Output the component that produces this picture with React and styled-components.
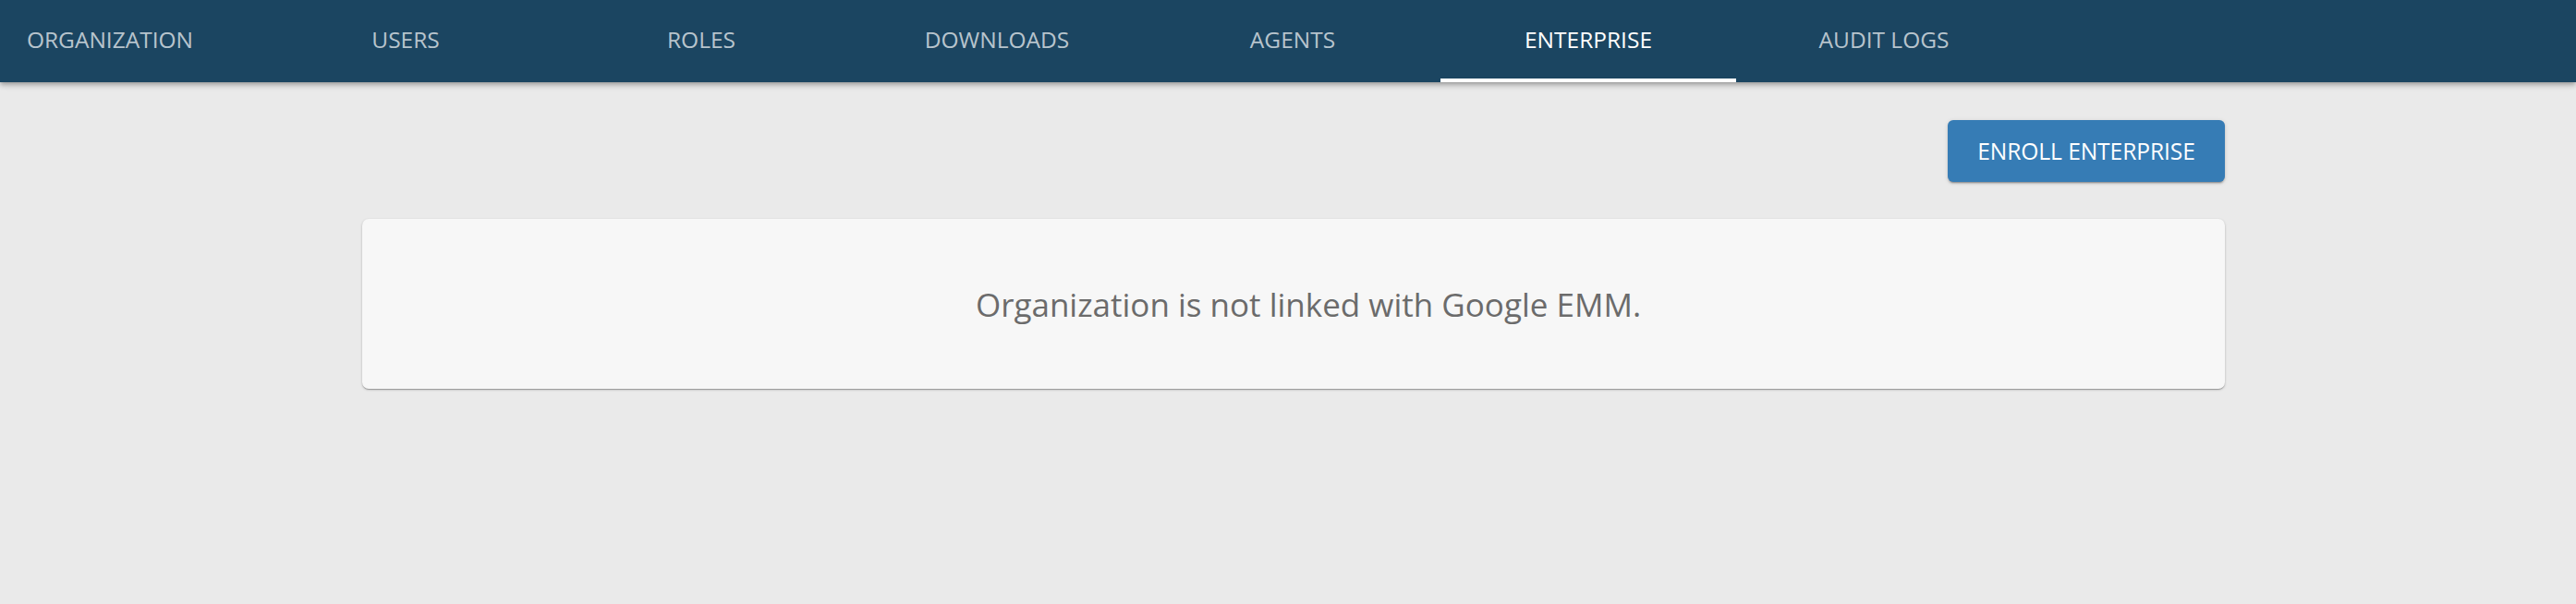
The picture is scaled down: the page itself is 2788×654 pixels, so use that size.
import React, { useState } from 'react'
import styled, { createGlobalStyle, css } from 'styled-components'

const tabs = ['ORGANIZATION', 'USERS', 'ROLES', 'DOWNLOADS', 'AGENTS', 'ENTERPRISE', 'AUDIT LOGS']

function App() {
  const [active, setActive] = useState('ENTERPRISE')

  return (
    <>
      <GlobalStyle />
      <Page>
        <NavBar>
          <TabStrip>
            {tabs.map((tab) => (
              <Tab key={tab} $active={tab === active} onClick={() => setActive(tab)}>
                {tab}
              </Tab>
            ))}
          </TabStrip>
        </NavBar>

        <Content>
          <Actions>
            <Button>ENROLL ENTERPRISE</Button>
          </Actions>
          <Card>
            <Message>Organization is not linked with Google EMM.</Message>
          </Card>
        </Content>
      </Page>
    </>
  )
}

export default App

const GlobalStyle = createGlobalStyle`
  html, body {
    margin: 0;
    padding: 0;
    background: #eaeaea;
  }
  body {
    font-family: "Open Sans", "Noto Sans", sans-serif;
  }
  * {
    box-sizing: border-box;
  }
`
const Page = styled.div`
  width: 100%;
  min-height: 654px;
  background: #eaeaea;
  overflow: hidden;
`
const NavBar = styled.div`
  height: 89px;
  background-color: #1b4561;
  box-shadow: 0 2px 4px -1px rgba(0, 0, 0, 0.2), 0 4px 5px 0 rgba(0, 0, 0, 0.14), 0 1px 10px 0 rgba(0, 0, 0, 0.12);
  position: relative;
  z-index: 1;
`
const TabStrip = styled.div`
  display: flex;
  height: 100%;
  margin-left: -41px;
`
const Tab = styled.div`
  flex: 0 0 320px;
  display: flex;
  align-items: center;
  justify-content: center;
  padding-top: 4px;
  padding-bottom: 5px;
  font-size: 24.5px;
  color: rgba(255, 255, 255, 0.7);
  cursor: pointer;
  border-bottom: 4px solid transparent;

  ${(props) => props.$active && css`
    color: white;
    border-bottom-color: white;
  `}
`
const Content = styled.div`
  width: 2016px;
  margin-left: calc(50% - 1002px);
  padding-top: 41px;
`
const Actions = styled.div`
  display: flex;
  justify-content: flex-end;
  margin-bottom: 40px;
`
const Button = styled.button`
  width: 300px;
  height: 67px;
  border: none;
  border-radius: 6px;
  background-color: #367cb5;
  color: white;
  font-family: "Open Sans", "Noto Sans", sans-serif;
  font-size: 24.6px;
  letter-spacing: -0.1px;
  box-shadow: 0 3px 1px -2px rgba(0, 0, 0, 0.2), 0 2px 2px 0 rgba(0, 0, 0, 0.14), 0 1px 5px 0 rgba(0, 0, 0, 0.12);
  cursor: pointer;
`
const Card = styled.div`
  height: 184px;
  display: flex;
  align-items: center;
  justify-content: center;
  padding-left: 32px;
  border-radius: 7px;
  background-color: #f7f7f7;
  box-shadow: 0 1px 3px 0 rgba(0, 0, 0, 0.2), 0 1px 1px 0 rgba(0, 0, 0, 0.14), 0 2px 1px -1px rgba(0, 0, 0, 0.12);
`
const Message = styled.div`
  font-size: 35px;
  color: #6b6b6b;
`
